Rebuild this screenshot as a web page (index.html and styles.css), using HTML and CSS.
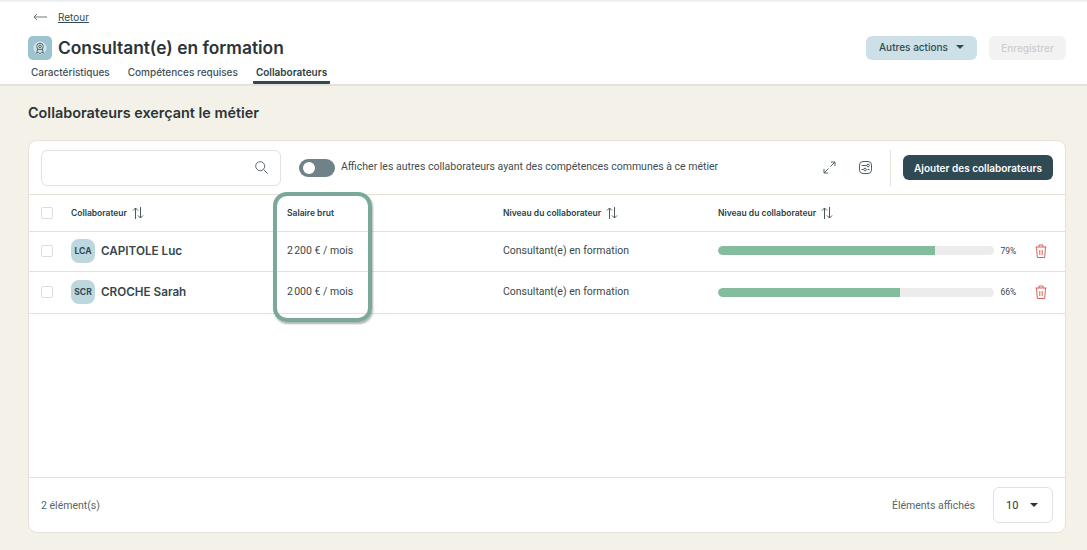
FILE: index.html
```html
<!DOCTYPE html>
<html lang="fr">
<head>
<meta charset="utf-8">
<title>Consultant(e) en formation</title>
<link rel="stylesheet" href="styles.css">
</head>
<body>
<header class="top">
  <a class="back"><svg class="back-ic" width="14" height="8" viewBox="0 0 14 8"><path d="M4 1 1 4l3 3M1 4h13" fill="none" stroke="#6b7a7e" stroke-width="1"/></svg><span class="back-link">Retour</span></a>
  <div class="title-row">
    <div class="title-left">
      <span class="job-ic"><svg width="14" height="14" viewBox="0 0 14 14" fill="none" stroke="#4d6268" stroke-width="1"><circle cx="7" cy="7" r="6.500" fill="#d5e4e8" stroke="none"/><circle cx="7" cy="5.500" r="3.300"/><circle cx="7" cy="5.500" r="1.300"/><path d="M4.500 8 3.800 12.200l1.700-.8L7 12.800l1.500-1.400 1.700.8L9.500 8"/></svg></span>
      <h1 class="title">Consultant(e) en formation</h1>
    </div>
    <div class="actions">
      <button class="btn-light">Autres actions<span class="caret"></span></button>
      <button class="btn-off">Enregistrer</button>
    </div>
  </div>
  <nav class="tabs">
    <span class="tab">Caractéristiques</span>
    <span class="tab">Compétences requises</span>
    <span class="tab tab-on">Collaborateurs</span>
  </nav>
</header>
<main class="main">
  <h2 class="section">Collaborateurs exerçant le métier</h2>
  <section class="card">
    <div class="toolbar">
      <div class="search"><svg width="13" height="13" viewBox="0 0 13 13" fill="none" stroke="#5c6b70" stroke-width="1"><circle cx="5.200" cy="5.200" r="4.500"/><path d="m8.500 8.500 4.200 4.200"/></svg></div>
      <span class="switch"><span class="knob"></span></span>
      <span class="switch-label">Afficher les autres collaborateurs ayant des compétences communes à ce métier</span>
      <svg class="ic-expand" width="13" height="13" viewBox="0 0 13 13" fill="none" stroke="#4d6268" stroke-width="1"><path d="M8 1h4v4M12 1 7.500 5.500M5 12H1V8M1 12l4.500-4.500"/></svg>
      <svg class="ic-filter" width="13" height="13" viewBox="0 0 13 13" fill="none" stroke="#4d6268" stroke-width="1"><rect x=".5" y=".5" width="12" height="12" rx="3.500"/><path d="M2.500 4.500h5M2.500 8.500h2M8.500 8.500h2"/><circle cx="9" cy="4.500" r="1.300"/><circle cx="6" cy="8.500" r="1.300"/></svg>
      <span class="divider"></span>
      <button class="btn-dark">Ajouter des collaborateurs</button>
    </div>
    <div class="row head">
      <span class="check"></span>
      <span class="th">Collaborateur<svg class="sort" width="12" height="12" viewBox="0 0 12 12" fill="none" stroke="#4d5a5e" stroke-width="1"><path d="M3.500 12V1M1 3.500 3.500 1 6 3.500M8.500 0v11M6 8.500 8.500 11 11 8.500"/></svg></span>
      <span class="th">Salaire brut</span>
      <span class="th">Niveau du collaborateur<svg class="sort" width="12" height="12" viewBox="0 0 12 12" fill="none" stroke="#4d5a5e" stroke-width="1"><path d="M3.500 12V1M1 3.500 3.500 1 6 3.500M8.500 0v11M6 8.500 8.500 11 11 8.500"/></svg></span>
      <span class="th">Niveau du collaborateur<svg class="sort" width="12" height="12" viewBox="0 0 12 12" fill="none" stroke="#4d5a5e" stroke-width="1"><path d="M3.500 12V1M1 3.500 3.500 1 6 3.500M8.500 0v11M6 8.500 8.500 11 11 8.500"/></svg></span>
    </div>
    <div class="row body">
      <span class="check"></span>
      <span class="person"><span class="avatar">LCA</span><span class="name">CAPITOLE Luc</span></span>
      <span class="td">2&#8239;200 € / mois</span>
      <span class="td">Consultant(e) en formation</span>
      <span class="level"><span class="track"><span class="fill" style="width:78.600%"></span></span><span class="pct">79%</span><svg class="trash" width="12" height="14" viewBox="0 0 12 14" fill="none" stroke="#d9605a" stroke-width="1"><path d="M.5 3h11M4 3V1h4v2M1.500 3l.8 10.500h7.400L10.500 3M4.800 6v5M7.200 6v5"/></svg></span>
    </div>
    <div class="row body body2">
      <span class="check"></span>
      <span class="person"><span class="avatar">SCR</span><span class="name">CROCHE Sarah</span></span>
      <span class="td">2&#8239;000 € / mois</span>
      <span class="td">Consultant(e) en formation</span>
      <span class="level"><span class="track"><span class="fill" style="width:66%"></span></span><span class="pct">66%</span><svg class="trash" width="12" height="14" viewBox="0 0 12 14" fill="none" stroke="#d9605a" stroke-width="1"><path d="M.5 3h11M4 3V1h4v2M1.500 3l.8 10.500h7.400L10.500 3M4.800 6v5M7.200 6v5"/></svg></span>
    </div>
    <div class="spacer"></div>
    <footer class="foot">
      <span class="count">2 élément(s)</span>
      <span class="per-label">Éléments affichés</span>
      <span class="per"><span>10</span><span class="caret"></span></span>
    </footer>
    <div class="highlight"></div>
  </section>
</main>
</body>
</html>
```
FILE: styles.css
```css
* { box-sizing: border-box; }
html, body { margin: 0; height: 100%; }
body { width: 1087px; height: 550px; overflow: hidden; background: #f4f1e9; font-family: Roboto, "Liberation Sans", sans-serif; color: #2d3b40; display: flex; flex-direction: column; }
button { font: inherit; border: 0; }

.top { height: 86px; background: #fff; padding: 10px 21px 0 28px; border-bottom: 2px solid #e6e2d8; box-shadow: inset 0 3px 3px -2px #dfe3e8; flex: none; }
.back { display: flex; align-items: center; height: 14px; padding-left: 5px; gap: 11px; font-family: Inter, sans-serif; font-size: 10px; }
.back-link { text-decoration: underline; color: #2f4a52; }
.title-row { display: flex; justify-content: space-between; align-items: center; margin-top: 11px; height: 26px; }
.title-left { display: flex; align-items: center; gap: 6px; }
.job-ic { width: 24px; height: 24px; border-radius: 5px; background: #9cc4cf; display: flex; align-items: center; justify-content: center; }
.title { margin: -2px 0 0; font-family: Inter, sans-serif; font-size: 17.360px; font-weight: 600; color: #2b3538; }
.actions { display: flex; gap: 12px; }
.btn-light { width: 111px; height: 24px; border-radius: 6px; background: #cde0e8; color: #2f4a52; font-family: Inter, sans-serif; font-size: 10px; font-weight: 500; display: flex; align-items: center; justify-content: center; gap: 8px; padding: 0 0 2px; }
.caret { width: 0; height: 0; border-left: 4px solid transparent; border-right: 4px solid transparent; border-top: 4px solid #2f4a52; }
.btn-off { width: 77px; height: 24px; border-radius: 6px; background: #f2f2f2; color: #cdcdcd; font-family: Inter, sans-serif; font-size: 10px; font-weight: 500; }
.tabs { display: flex; gap: 12px; margin-top: 2px; height: 21px; }
.tab { padding: 3px 3px 0; font-family: Inter, sans-serif; font-size: 10px; font-weight: 500; color: #3f5056; }
.tab-on { font-weight: 600; color: #2b3f45; border-bottom: 3px solid #2f4a52; border-radius: 0 0 1px 1px; }

.main { flex: 1; padding: 0 21px 17px 28px; display: flex; flex-direction: column; min-height: 0; }
.section { margin: 18px 0 18px; height: 18px; line-height: 18px; font-family: Inter, sans-serif; font-size: 14.400px; font-weight: 600; color: #2b3538; }

.card { position: relative; flex: 1; background: #fff; border: 1px solid #e6e2d8; border-radius: 9px; display: flex; flex-direction: column; }
.toolbar { height: 54px; flex: none; display: flex; align-items: center; padding: 0 12px; border-bottom: 1px solid #e6e2d8; }
.search { width: 240px; height: 36px; border: 1px solid #e2e2e0; border-radius: 6px; display: flex; align-items: center; justify-content: flex-end; padding-right: 12px; }
.switch { width: 36px; height: 18px; margin-left: 18px; border-radius: 9px; background: #6f8288; padding: 3px 4px; flex: none; }
.knob { display: block; width: 12px; height: 12px; border-radius: 50%; background: #fff; }
.switch-label { margin-left: 6px; font-size: 10.500px; color: #3f4c50; width: 482px; white-space: nowrap; margin-top: -3px; flex: none; }
.ic-expand { flex: none; }
.ic-filter { margin-left: 23px; flex: none; }
.divider { width: 1px; height: 36px; background: #e6e2d8; margin-left: 18px; flex: none; }
.btn-dark { width: 150px; height: 25px; margin-left: 12px; border-radius: 6px; background: #2f4a52; color: #fff; font-family: Inter, sans-serif; font-size: 10px; font-weight: 600; padding: 0; flex: none; }

.row { display: grid; grid-template-columns: 30px 216px 216px 215px 1fr; align-items: center; padding-left: 12px; border-bottom: 1px solid #e6e2d8; flex: none; }
.head { height: 37px; }
.body { height: 40px; padding-bottom: 1px; }
.body2 { height: 42px; }
.check { width: 12px; height: 12px; border: 1px solid #dcdcda; border-radius: 2px; }
.th { font-family: Inter, sans-serif; font-size: 8.500px; font-weight: 600; color: #2b3f45; display: flex; align-items: center; gap: 5px; }
.td { font-size: 10.500px; color: #3a474b; margin-bottom: 1.500px; }
.person { display: flex; align-items: center; gap: 6px; }
.avatar { width: 24px; height: 24px; border-radius: 8px; background: #bdd7df; font-family: Inter, sans-serif; font-size: 8.500px; font-weight: 700; color: #2f4a52; display: flex; align-items: center; justify-content: center; }
.name { font-family: Inter, sans-serif; font-size: 11.700px; font-weight: 600; color: #34464c; }
.level { display: flex; align-items: center; margin-bottom: 1px; }
.body2 .level { margin-bottom: 0; }
.track { width: 276px; height: 9px; border-radius: 5px; background: #ececec; overflow: hidden; display: block; flex: none; }
.fill { display: block; height: 100%; background: #84bd9e; border-radius: 5px 0 0 5px; }
.pct { margin-left: 6.500px; width: 34.500px; font-size: 8.500px; color: #3a474b; }
.trash { flex: none; }
.spacer { flex: 1; }
.foot { height: 55px; flex: none; border-top: 1px solid #e6e2d8; display: flex; align-items: center; padding: 0 12px; font-size: 10.500px; color: #55666b; }
.count { flex: 1; }
.per { width: 60px; height: 36px; margin-left: 18px; border: 1px solid #e2e2e0; border-radius: 6px; display: flex; align-items: center; justify-content: space-between; padding: 0 14px 0 12px; font-size: 11px; color: #2b3538; }
.per .caret { border-top-color: #2b3538; }
.highlight { position: absolute; left: 244px; top: 51px; width: 99px; height: 130px; border: 4px solid #7aa899; border-radius: 14px; box-shadow: 1px 2px 2px rgba(70,90,85,.45); pointer-events: none; }
```
